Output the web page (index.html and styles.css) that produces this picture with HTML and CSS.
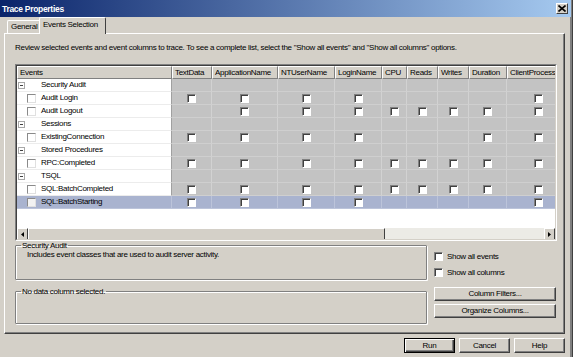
FILE: index.html
```html
<!DOCTYPE html>
<html lang="en">
<head>
    <meta charset="UTF-8">
    <title>Trace Properties</title>
    <link rel="stylesheet" href="styles.css">
</head>
<body>

<div class="window">
    <div class="titlebar">
        <span class="title">Trace Properties</span>
        <span class="close">
            <svg width="8" height="7" viewBox="0 0 8 7"><path d="M0.5 0.5 L7.5 6.5 M7.5 0.5 L0.5 6.5" stroke="#000" stroke-width="1.6"/></svg>
        </span>
    </div>

    <div class="tabs">
        <div class="tab">General</div>
        <div class="tab active">Events Selection</div>
    </div>

    <div class="panel">
        <p class="intro">Review selected events and event columns to trace. To see a complete list, select the "Show all events" and "Show all columns" options.</p>

        <div class="grid">
            <div class="grid-inner">
                <div class="row head">
                    <div class="hc">Events</div>
                    <div class="hc">TextData</div>
                    <div class="hc">ApplicationName</div>
                    <div class="hc">NTUserName</div>
                    <div class="hc">LoginName</div>
                    <div class="hc">CPU</div>
                    <div class="hc">Reads</div>
                    <div class="hc">Writes</div>
                    <div class="hc">Duration</div>
                    <div class="hc">ClientProcess</div>
                </div>

                <div class="row group">
                    <div class="ev"><span class="slot"><span class="toggle"></span></span>Security Audit</div>
                    <div class="c"></div><div class="c"></div><div class="c"></div><div class="c"></div><div class="c"></div><div class="c"></div><div class="c"></div><div class="c"></div><div class="c"></div>
                </div>
                <div class="row">
                    <div class="ev"><span class="slot"><span class="evbox"></span></span>Audit Login</div>
                    <div class="c"><span class="cb"></span></div><div class="c"><span class="cb"></span></div><div class="c"><span class="cb"></span></div><div class="c"><span class="cb"></span></div><div class="c"></div><div class="c"></div><div class="c"></div><div class="c"></div><div class="c"><span class="cb"></span></div>
                </div>
                <div class="row">
                    <div class="ev"><span class="slot"><span class="evbox"></span></span>Audit Logout</div>
                    <div class="c"></div><div class="c"><span class="cb"></span></div><div class="c"><span class="cb"></span></div><div class="c"><span class="cb"></span></div><div class="c"><span class="cb"></span></div><div class="c"><span class="cb"></span></div><div class="c"><span class="cb"></span></div><div class="c"><span class="cb"></span></div><div class="c"><span class="cb"></span></div>
                </div>
                <div class="row group">
                    <div class="ev"><span class="slot"><span class="toggle"></span></span>Sessions</div>
                    <div class="c"></div><div class="c"></div><div class="c"></div><div class="c"></div><div class="c"></div><div class="c"></div><div class="c"></div><div class="c"></div><div class="c"></div>
                </div>
                <div class="row">
                    <div class="ev"><span class="slot"><span class="evbox"></span></span>ExistingConnection</div>
                    <div class="c"><span class="cb"></span></div><div class="c"><span class="cb"></span></div><div class="c"><span class="cb"></span></div><div class="c"><span class="cb"></span></div><div class="c"></div><div class="c"></div><div class="c"></div><div class="c"><span class="cb"></span></div><div class="c"><span class="cb"></span></div>
                </div>
                <div class="row group">
                    <div class="ev"><span class="slot"><span class="toggle"></span></span>Stored Procedures</div>
                    <div class="c"></div><div class="c"></div><div class="c"></div><div class="c"></div><div class="c"></div><div class="c"></div><div class="c"></div><div class="c"></div><div class="c"></div>
                </div>
                <div class="row">
                    <div class="ev"><span class="slot"><span class="evbox"></span></span>RPC:Completed</div>
                    <div class="c"><span class="cb"></span></div><div class="c"><span class="cb"></span></div><div class="c"><span class="cb"></span></div><div class="c"><span class="cb"></span></div><div class="c"><span class="cb"></span></div><div class="c"><span class="cb"></span></div><div class="c"><span class="cb"></span></div><div class="c"><span class="cb"></span></div><div class="c"><span class="cb"></span></div>
                </div>
                <div class="row group">
                    <div class="ev"><span class="slot"><span class="toggle"></span></span>TSQL</div>
                    <div class="c"></div><div class="c"></div><div class="c"></div><div class="c"></div><div class="c"></div><div class="c"></div><div class="c"></div><div class="c"></div><div class="c"></div>
                </div>
                <div class="row">
                    <div class="ev"><span class="slot"><span class="evbox"></span></span>SQL:BatchCompleted</div>
                    <div class="c"><span class="cb"></span></div><div class="c"><span class="cb"></span></div><div class="c"><span class="cb"></span></div><div class="c"><span class="cb"></span></div><div class="c"><span class="cb"></span></div><div class="c"><span class="cb"></span></div><div class="c"><span class="cb"></span></div><div class="c"><span class="cb"></span></div><div class="c"><span class="cb"></span></div>
                </div>
                <div class="row selected">
                    <div class="ev"><span class="slot"><span class="evbox dotted"></span></span>SQL:BatchStarting</div>
                    <div class="c"><span class="cb"></span></div><div class="c"><span class="cb"></span></div><div class="c"><span class="cb"></span></div><div class="c"><span class="cb"></span></div><div class="c"></div><div class="c"></div><div class="c"></div><div class="c"></div><div class="c"><span class="cb"></span></div>
                </div>

                <div class="grid-empty"></div>

                <div class="hscroll">
                    <span class="sbtn"><svg width="3" height="5" viewBox="0 0 3 5"><path d="M3 0 L0 2.5 L3 5 Z" fill="#000"/></svg></span>
                    <span class="thumb"></span>
                    <span class="track"></span>
                    <span class="sbtn"><svg width="3" height="5" viewBox="0 0 3 5"><path d="M0 0 L3 2.5 L0 5 Z" fill="#000"/></svg></span>
                </div>
            </div>
        </div>

        <div class="lower">
            <div class="boxes">
                <fieldset class="gbox first">
                    <legend>Security Audit</legend>
                    <div class="desc">Includes event classes that are used to audit server activity.</div>
                </fieldset>
                <fieldset class="gbox second">
                    <legend>No data column selected.</legend>
                </fieldset>
            </div>
            <div class="side">
                <label class="opt"><span class="cb"></span>Show all events</label>
                <label class="opt"><span class="cb"></span>Show all columns</label>
                <div class="side-buttons">
                    <button class="btn wide">Column Filters...</button>
                    <button class="btn wide">Organize Columns...</button>
                </div>
            </div>
        </div>
    </div>

    <div class="footer">
        <button class="btn default">Run</button>
        <button class="btn">Cancel</button>
        <button class="btn">Help</button>
    </div>
</div>

</body>
</html>
```

FILE: styles.css
```css
body {
    margin: 0;
    background-color: #d4d0c8;
    font-family: "Liberation Sans", Arial, sans-serif;
    font-size: 8px;
    letter-spacing: -0.3px;
    color: #000;
}
.window {
    width: 573px;
    height: 357px;
    box-sizing: border-box;
    background-color: #d4d0c8;
    border-right: 1px solid #404040;
    box-shadow: inset -2px 0 0 #808080;
    overflow: hidden;
}
.titlebar {
    height: 17px;
    margin-right: 1px;
    display: flex;
    align-items: center;
    justify-content: space-between;
    padding: 0 3px 0 2px;
    background: linear-gradient(to right, #0a246a, #a6caf0);
}
.title {
    color: #fff;
    font-weight: bold;
    font-size: 8.5px;
    letter-spacing: -0.3px;
}
.close {
    width: 12px;
    height: 11px;
    box-sizing: border-box;
    display: flex;
    align-items: center;
    justify-content: center;
    background-color: #d4d0c8;
    border: 1px solid;
    border-color: #fff #404040 #404040 #fff;
}
.tabs {
    height: 16px;
    display: flex;
    align-items: flex-end;
    padding-left: 7px;
}
.tab {
    height: 12px;
    line-height: 12px;
    padding: 0 2px 0 3px;
    border: 1px solid;
    border-color: #fff #404040 transparent #fff;
    border-bottom: none;
    border-radius: 2px 2px 0 0;
    width: 27px;
    white-space: nowrap;
}
.tab.active {
    height: 16px;
    line-height: 14px;
    width: 59px;
    padding: 0 3px;
    margin-left: -2px;
    margin-bottom: -1px;
    background-color: #d4d0c8;
    position: relative;
    z-index: 1;
}
.panel {
    margin: 0 7px 0 4px;
    height: 301px;
    box-sizing: border-box;
    border: 1px solid;
    border-color: #fff #404040 #404040 #fff;
    box-shadow: inset -1px -1px 0 #808080;
    padding: 8px 0 0 10px;
}
.intro {
    margin: 0;
    height: 12px;
    line-height: 12px;
}
.grid {
    margin-top: 10px;
    width: 542px;
    height: 177px;
    box-sizing: border-box;
    border: 1px solid;
    border-color: #808080 #fff #fff #808080;
}
.grid-inner {
    height: 100%;
    box-sizing: border-box;
    border: 1px solid;
    border-color: #404040 #d4d0c8 #d4d0c8 #404040;
    background-color: #fff;
    overflow: hidden;
}
.row {
    display: grid;
    grid-template-columns: 155px 40px 66px 57px 47px 25px 31px 31px 38px 64px;
    height: 13px;
    width: 554px;
}
.row > div {
    box-sizing: border-box;
    height: 13px;
}
.hc {
    background-color: #d4d0c8;
    border: 1px solid;
    border-color: #fff #808080 #808080 #fff;
    line-height: 11px;
    padding-left: 2px;
    white-space: nowrap;
    overflow: hidden;
}
.ev {
    display: flex;
    align-items: center;
    background-color: #fff;
    border-right: 1px solid #a0a0a0;
    border-bottom: 1px solid #ececec;
    line-height: 12px;
    white-space: nowrap;
}
.slot {
    width: 24px;
    height: 12px;
    display: flex;
    align-items: center;
    flex-shrink: 0;
}
.toggle {
    width: 7px;
    height: 7px;
    box-sizing: border-box;
    margin-left: 1px;
    border: 1px solid #a8a8a8;
    display: flex;
    align-items: center;
    justify-content: center;
}
.toggle::before {
    content: "";
    width: 3px;
    height: 1px;
    background-color: #404040;
}
.evbox {
    width: 9px;
    height: 9px;
    box-sizing: border-box;
    margin-left: 10px;
    border: 1px solid;
    border-color: #8a8a8a #e0e0e0 #e0e0e0 #8a8a8a;
    background-color: #fff;
}
.evbox.dotted {
    background-color: #f2f2f2;
}
.c {
    background-color: #c3c3c3;
    border-right: 1px solid #d2d2d2;
    border-bottom: 1px solid #cfcfcf;
    display: flex;
    align-items: center;
    justify-content: center;
}
.selected .ev,
.selected .c {
    background-color: #a9b3cf;
    border-color: #bcc4da;
}
.cb {
    display: inline-block;
    width: 9px;
    height: 9px;
    box-sizing: border-box;
    border: 1px solid;
    border-color: #808080 #fff #fff #808080;
    box-shadow: inset 1px 1px 0 #404040;
    background-color: #fff;
}
.grid-empty {
    height: 19px;
}
.hscroll {
    display: flex;
    height: 12px;
}
.sbtn {
    width: 11px;
    height: 12px;
    box-sizing: border-box;
    border: 1px solid;
    border-color: #fff #404040 #404040 #fff;
    background-color: #d4d0c8;
    display: flex;
    align-items: center;
    justify-content: center;
    flex-shrink: 0;
}
.thumb {
    width: 357px;
    height: 12px;
    box-sizing: border-box;
    border: 1px solid;
    border-color: #fff #404040 #404040 #fff;
    background-color: #d4d0c8;
}
.track {
    flex: 1;
    background-color: #ecebe6;
}
.lower {
    display: flex;
    gap: 7px;
    height: 83px;
}
.boxes {
    width: 412px;
}
.gbox {
    margin: 0;
    padding: 0 0 0 11px;
    box-sizing: border-box;
    border: 1px solid #808080;
    box-shadow: 1px 1px 0 #fff, inset 1px 1px 0 #fff;
    border-radius: 1px;
}
.gbox legend {
    padding: 0 1px;
    margin-left: -6px;
    line-height: 9px;
}
.gbox.first {
    height: 39px;
}
.gbox.second {
    height: 37px;
    margin-top: 7px;
}
.desc {
    line-height: 11px;
    margin-top: -1px;
}
.side {
    width: 122px;
    padding-top: 10px;
}
.opt {
    display: flex;
    align-items: center;
    height: 10px;
    margin-bottom: 6px;
}
.opt .cb {
    margin-right: 4px;
}
.side-buttons {
    margin-top: 10px;
    display: flex;
    flex-direction: column;
    gap: 3px;
}
.btn {
    font-family: "Liberation Sans", Arial, sans-serif;
    font-size: 8px;
    letter-spacing: -0.3px;
    color: #000;
    height: 15px;
    padding: 0;
    background-color: #d4d0c8;
    border: 1px solid;
    border-color: #fff #404040 #404040 #fff;
    box-shadow: inset -1px -1px 0 #808080;
    line-height: 12px;
}
.btn.wide {
    width: 122px;
    height: 14px;
}
.footer {
    display: flex;
    justify-content: flex-end;
    gap: 4px;
    padding: 4px 7px 0 0;
}
.footer .btn {
    width: 51px;
}
.btn.default {
    border: 1px solid #000;
    box-shadow: inset 1px 1px 0 #fff, inset -1px -1px 0 #404040, inset -2px -2px 0 #808080;
}
```
